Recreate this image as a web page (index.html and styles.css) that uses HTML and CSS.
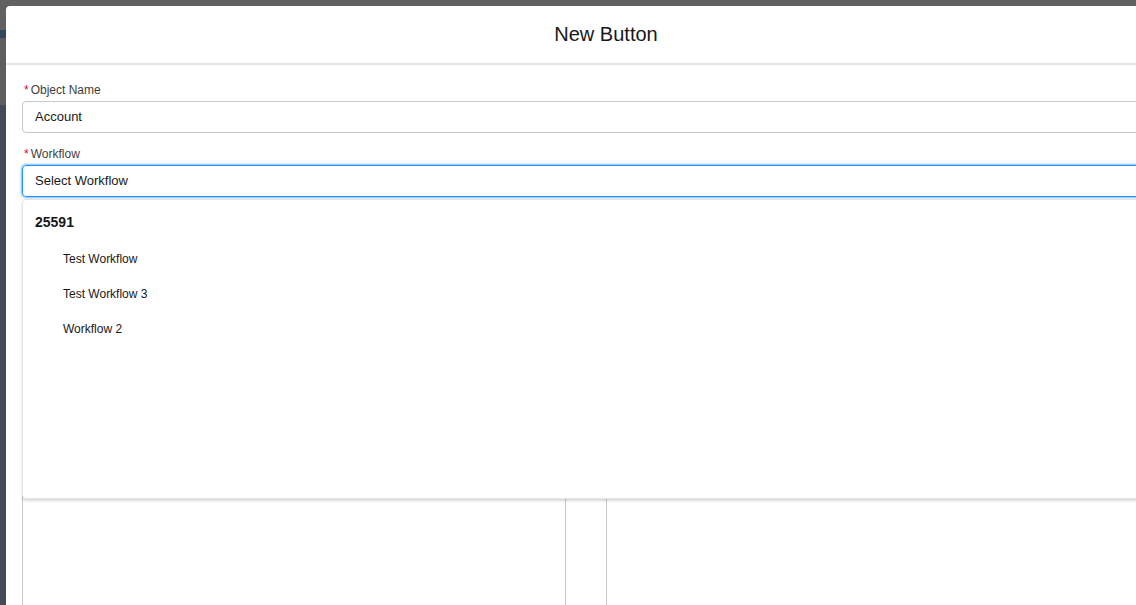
FILE: index.html
```html
<!DOCTYPE html>
<html>
<head>
    <meta charset="UTF-8">
    <link rel="stylesheet" href="styles.css">
</head>
<body>
    <div class="modal">
        <div class="modal-header">
            <h2 class="modal-title">New Button</h2>
        </div>
        <div class="modal-body">
            <div class="field">
                <label class="field-label"><abbr class="required">*</abbr>Object Name</label>
                <div class="input">Account</div>
            </div>
            <div class="field">
                <label class="field-label"><abbr class="required">*</abbr>Workflow</label>
                <div class="combo">
                    <div class="input input-focus">Select Workflow</div>
                    <div class="dropdown">
                        <div class="group-title">25591</div>
                        <div class="option">Test Workflow</div>
                        <div class="option">Test Workflow 3</div>
                        <div class="option">Workflow 2</div>
                    </div>
                </div>
            </div>
            <div class="dual-list">
                <div class="list-box"></div>
                <div class="list-box"></div>
            </div>
        </div>
    </div>
</body>
</html>
```

FILE: styles.css
```css
html, body {
    height: 100%;
}
body {
    margin: 0;
    overflow: hidden;
    font-family: "Liberation Sans", Arial, sans-serif;
    color: #181818;
    background: linear-gradient(to bottom,
        #616161 0, #616161 30px,
        #34475a 30px, #34475a 38px,
        #5e5e5e 38px, #5e5e5e 105px,
        #434b57 105px, #434b57 100%);
}
.modal {
    margin: 6px 0 0 6px;
    width: 1200px;
    height: calc(100% - 6px);
    overflow: hidden;
    background: #fff;
    border-radius: 4px 4px 0 0;
}
.modal-header {
    height: 57px;
    display: flex;
    align-items: center;
    justify-content: center;
    border-bottom: 2px solid #e5e5e5;
}
.modal-title {
    margin: 0;
    font-size: 20px;
    font-weight: normal;
    color: #181818;
}
.modal-body {
    padding: 16px;
}
.field {
    margin-bottom: 12px;
}
.field-label {
    display: block;
    font-size: 12px;
    line-height: 18px;
    color: #3e3e3c;
    margin-bottom: 2px;
    padding-left: 2px;
}
.required {
    color: #ea001e;
    text-decoration: none;
    margin-right: 2px;
}
.input {
    box-sizing: border-box;
    height: 32px;
    line-height: 30px;
    padding: 0 12px;
    border: 1px solid #c9c9c9;
    border-radius: 4px;
    font-size: 13px;
    color: #181818;
}
.input-focus {
    border-color: #1b96ff;
    box-shadow: 0 0 3px #0176d3;
}
.combo {
    position: relative;
}
.dropdown {
    position: absolute;
    top: 34px;
    left: 0;
    right: 0;
    height: 300px;
    box-sizing: border-box;
    background: #fff;
    border: 1px solid #e5e5e5;
    border-radius: 4px;
    box-shadow: 0 2px 3px rgba(0, 0, 0, 0.16);
    padding-top: 12px;
    z-index: 2;
}
.group-title {
    padding: 0 12px;
    font-size: 14px;
    font-weight: bold;
    line-height: 20px;
    margin-bottom: 10px;
}
.option {
    padding-left: 40px;
    font-size: 12px;
    line-height: 35px;
    color: #181818;
}
.dual-list {
    display: grid;
    grid-template-columns: 544px 544px;
    gap: 40px;
    margin-top: 260px;
}
.list-box {
    height: 400px;
    border: 1px solid #c9c9c9;
    border-radius: 4px;
}
```
